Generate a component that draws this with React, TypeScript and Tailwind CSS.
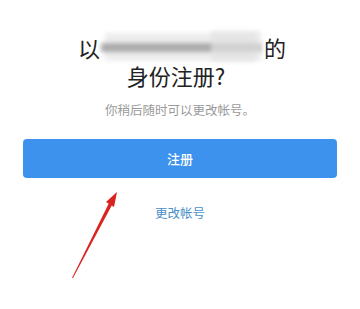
export default function App() {
  return (
    <div
      className="relative w-[360px] h-[309px] bg-white overflow-hidden"
      style={{ fontFamily: '"Noto Sans CJK SC", "Noto Sans", sans-serif' }}
    >
      <div className="flex flex-col items-center pt-[33px]">
        <div className="flex items-center text-[22px] leading-[28px] text-[#222] pl-[4px]">
          <span>以</span>
          <span className="relative w-[162px] h-[24px] mx-[1px]">
            <span className="absolute left-[4px] top-[-2px] w-[150px] h-[28px] bg-[#ededed] blur-[2px]" />
            <span className="absolute left-[0px] top-[8px] w-[160px] h-[9px] bg-[#acacac] blur-[2px]" />
            <span className="absolute left-[110px] top-[-4px] w-[50px] h-[30px] bg-[#e2e2e2] blur-[2px] opacity-70" />
          </span>
          <span>的</span>
        </div>
        <div className="text-[22px] leading-[28px] text-[#222] -ml-[8px]">身份注册?</div>
        <div className="mt-[12px] text-[12.5px] leading-[18px] text-[#9a9a9a]">
          你稍后随时可以更改帐号。
        </div>
      </div>

      <div className="px-[23px] mt-[20px]">
        <button
          type="button"
          className="w-full h-[39px] rounded-[4px] bg-[#3d92ee] text-white text-[13px] font-medium"
        >
          注册
        </button>
      </div>

      <div className="mt-[26px] text-center text-[12.5px] leading-[18px] text-[#4a8fca]">
        更改帐号
      </div>

      <svg
        className="absolute left-0 top-0"
        width="360"
        height="309"
        viewBox="0 0 360 309"
      >
        <polygon points="72,278 109,203 112,205 73,278" fill="#d9231f" />
        <polygon points="117,192 106,202 114,207" fill="#d9231f" />
      </svg>
    </div>
  );
}
